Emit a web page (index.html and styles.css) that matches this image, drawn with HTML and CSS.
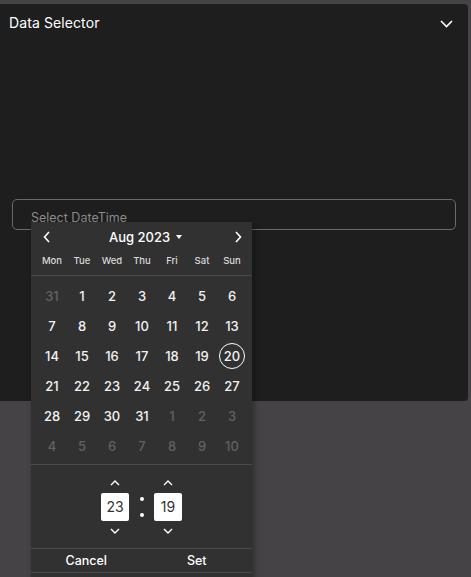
FILE: index.html
```html
<!DOCTYPE html>
<html lang="en">
<head>
<meta charset="utf-8">
<title>Data Selector</title>
<link rel="stylesheet" href="styles.css">
</head>
<body>
<section class="panel">
  <header class="panel-head">
    <span class="panel-title">Data Selector</span>
    <svg class="chev" width="13" height="8" viewBox="0 0 13 8"><path d="M1 1 L6.5 6.5 L12 1" fill="none" stroke="#fff" stroke-width="1.6"/></svg>
  </header>
  <div class="field">
    <div class="input">Select DateTime</div>
    <div class="picker">
      <div class="cal-head">
        <svg class="nav" width="8" height="12" viewBox="0 0 8 12"><path d="M6 1 L1.5 6 L6 11" fill="none" stroke="#fff" stroke-width="1.6"/></svg>
        <span class="month">Aug 2023 <span class="caret"></span></span>
        <svg class="nav" width="8" height="12" viewBox="0 0 8 12"><path d="M2 1 L6.5 6 L2 11" fill="none" stroke="#fff" stroke-width="1.6"/></svg>
      </div>
      <div class="weekdays">
        <span>Mon</span><span>Tue</span><span>Wed</span><span>Thu</span><span>Fri</span><span>Sat</span><span>Sun</span>
      </div>
      <div class="days">
        <span class="muted">31</span><span>1</span><span>2</span><span>3</span><span>4</span><span>5</span><span>6</span>
        <span>7</span><span>8</span><span>9</span><span>10</span><span>11</span><span>12</span><span>13</span>
        <span>14</span><span>15</span><span>16</span><span>17</span><span>18</span><span>19</span><span class="today"><b>20</b></span>
        <span>21</span><span>22</span><span>23</span><span>24</span><span>25</span><span>26</span><span>27</span>
        <span>28</span><span>29</span><span>30</span><span>31</span><span class="muted">1</span><span class="muted">2</span><span class="muted">3</span>
        <span class="muted">4</span><span class="muted">5</span><span class="muted">6</span><span class="muted">7</span><span class="muted">8</span><span class="muted">9</span><span class="muted">10</span>
      </div>
      <div class="time">
        <div class="tcol">
          <svg class="tarrow" width="10" height="6" viewBox="0 0 10 6"><path d="M1 5 L5 1 L9 5" fill="none" stroke="#fff" stroke-width="1.4"/></svg>
          <div class="tbox">23</div>
          <svg class="tarrow" width="10" height="6" viewBox="0 0 10 6"><path d="M1 1 L5 5 L9 1" fill="none" stroke="#fff" stroke-width="1.4"/></svg>
        </div>
        <div class="colon"><i></i><i></i></div>
        <div class="tcol">
          <svg class="tarrow" width="10" height="6" viewBox="0 0 10 6"><path d="M1 5 L5 1 L9 5" fill="none" stroke="#fff" stroke-width="1.4"/></svg>
          <div class="tbox">19</div>
          <svg class="tarrow" width="10" height="6" viewBox="0 0 10 6"><path d="M1 1 L5 5 L9 1" fill="none" stroke="#fff" stroke-width="1.4"/></svg>
        </div>
      </div>
      <div class="actions">
        <button class="btn">Cancel</button>
        <button class="btn">Set</button>
      </div>
    </div>
  </div>
</section>
</body>
</html>
```
FILE: styles.css
```css
* { box-sizing: border-box; }
html, body { margin: 0; padding: 0; }
body {
  background: #454346;
  font-family: "Inter", "Liberation Sans", sans-serif;
  color: #fff;
  height: 577px;
  overflow: hidden;
}
.panel {
  margin-top: 4px;
  width: 468px;
  height: 397px;
  background: #1e1e1e;
  border-radius: 0 4px 4px 0;
}
.panel-head {
  display: flex;
  align-items: center;
  justify-content: space-between;
  padding: 7px 15px 0 9px;
  height: 31px;
}
.panel-title {
  font-size: 14px;
  line-height: 20px;
  font-weight: 400;
  letter-spacing: 0.1px;
}
.chev { display: block; margin-top: 1px; }
.field {
  position: relative;
  margin: 164px 0 0 12px;
  width: 444px;
}
.input {
  height: 31px;
  border: 1px solid #6a6a6a;
  border-radius: 5px;
  padding: 0 18px;
  font-size: 12.5px;
  line-height: 35px;
  color: #8b8b8b;
}
.picker {
  position: absolute;
  left: 19px;
  top: 23px;
  width: 221px;
  height: 360px;
  background: #313131;
  box-shadow: 2px 2px 6px rgba(0,0,0,0.35);
}
.cal-head {
  display: flex;
  align-items: center;
  justify-content: space-between;
  height: 29px;
  padding: 0 10px 0 12px;
}
.nav { display: block; }
.month {
  font-size: 13px;
  font-weight: 500;
  display: flex;
  align-items: center;
  gap: 6px;
  margin-left: 6px;
}
.caret {
  width: 0; height: 0;
  border-left: 3.5px solid transparent;
  border-right: 3.5px solid transparent;
  border-top: 4px solid #fff;
}
.weekdays {
  display: grid;
  grid-template-columns: repeat(7, 30px);
  padding: 0 5px 6px 6px;
  height: 25px;
  align-items: center;
  font-size: 9.5px;
  font-weight: 500;
  color: #d8d8d8;
  border-bottom: 1px solid #4a4a4a;
}
.weekdays span { text-align: center; }
.days {
  display: grid;
  grid-template-columns: repeat(7, 30px);
  grid-auto-rows: 30px;
  padding: 5px 5px 3px 6px;
  border-bottom: 1px solid #4a4a4a;
  font-size: 13px;
  font-weight: 500;
}
.days span {
  display: flex;
  align-items: center;
  justify-content: center;
  color: #f2f2f2;
}
.days span.muted { color: #616161; }
.days .today b {
  font-weight: 500;
  width: 26px;
  height: 26px;
  border: 1px solid #fff;
  border-radius: 50%;
  display: flex;
  align-items: center;
  justify-content: center;
}
.time {
  display: flex;
  justify-content: center;
  align-items: center;
  gap: 10.5px;
  height: 84px;
  border-bottom: 1px solid #4a4a4a;
}
.tcol {
  display: flex;
  flex-direction: column;
  align-items: center;
  gap: 7px;
}
.tarrow { display: block; }
.tbox {
  width: 28px;
  height: 28px;
  background: #fff;
  border-radius: 2px;
  color: #333;
  font-size: 14px;
  display: flex;
  align-items: center;
  justify-content: center;
}
.colon {
  display: flex;
  flex-direction: column;
  gap: 12px;
}
.colon i {
  display: block;
  width: 4px;
  height: 4px;
  border-radius: 50%;
  background: #fff;
}
.actions {
  display: flex;
  height: 24px;
  border-bottom: 1px solid #4a4a4a;
}
.btn {
  flex: 1;
  background: none;
  border: 0;
  color: #fff;
  font-family: inherit;
  font-size: 12.5px;
  font-weight: 500;
  padding: 0;
  cursor: pointer;
}
```
